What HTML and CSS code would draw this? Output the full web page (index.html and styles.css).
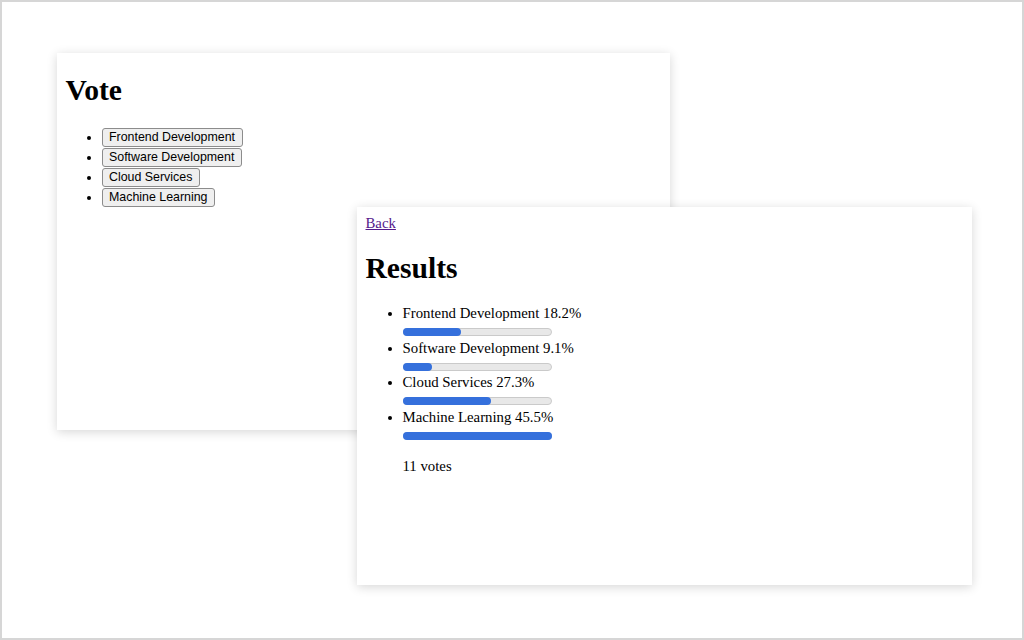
FILE: index.html
```html
<!DOCTYPE html>
<html lang="en">
<head>
    <meta charset="UTF-8">
    <meta name="viewport" content="width=device-width, initial-scale=1.0">
    <title>Poll</title>
    <link rel="stylesheet" href="styles.css">
</head>
<body>
    <div class="screen">

        <div class="window vote-window">
            <h1>Vote</h1>
            <ul class="options">
                <li><button>Frontend Development</button></li>
                <li><button>Software Development</button></li>
                <li><button>Cloud Services</button></li>
                <li><button>Machine Learning</button></li>
            </ul>
        </div>

        <div class="window results-window">
            <a href="#" class="back">Back</a>
            <h1>Results</h1>
            <ul class="results">
                <li>
                    <span class="label">Frontend Development 18.2%</span>
                    <span class="bar"><span class="fill" style="width: 40%"></span></span>
                </li>
                <li>
                    <span class="label">Software Development 9.1%</span>
                    <span class="bar"><span class="fill" style="width: 20%"></span></span>
                </li>
                <li>
                    <span class="label">Cloud Services 27.3%</span>
                    <span class="bar"><span class="fill" style="width: 60%"></span></span>
                </li>
                <li>
                    <span class="label">Machine Learning 45.5%</span>
                    <span class="bar"><span class="fill" style="width: 100%"></span></span>
                </li>
            </ul>
            <p class="total">11 votes</p>
        </div>

    </div>
</body>
</html>
```

FILE: styles.css
```css
body {
    margin: 0;
    background-color: #ffffff;
}
.screen {
    position: relative;
    width: 1024px;
    height: 640px;
    box-sizing: border-box;
    border: 2px solid #d6d6d6;
    background-color: #ffffff;
    overflow: hidden;
}
.window {
    position: absolute;
    box-sizing: border-box;
    background-color: #ffffff;
    box-shadow: 0 2px 10px rgba(0, 0, 0, 0.16);
    padding: 7.5px 8.5px;
    font-family: "Liberation Serif", "Times New Roman", serif;
    font-size: 14.8px;
    line-height: 17px;
    color: #000;
}
.vote-window {
    left: 55px;
    top: 51px;
    width: 613px;
    height: 377px;
}
.results-window {
    left: 355px;
    top: 205px;
    width: 615px;
    height: 378px;
}
h1 {
    font-size: 29.6px;
    line-height: 34px;
    font-weight: bold;
    margin: 19.8px 0;
}
.vote-window h1 {
    margin-top: 12.5px;
}
ul {
    margin: 14.8px 0;
    padding-left: 37px;
}
.options {
    padding-left: 36px;
}
.options li {
    line-height: 20px;
    height: 20px;
}
.options button {
    vertical-align: top;
    height: 19px;
    box-sizing: border-box;
    margin: 1px 0 0;
    padding: 0 6.5px;
    font-family: "Liberation Sans", Arial, sans-serif;
    font-size: 12.4px;
    color: #000;
    background-color: #efefef;
    border: 1px solid #8c8c8c;
    border-radius: 3px;
}
.back {
    color: #551a8b;
    text-decoration: underline;
}
.results li {
    height: 34.6px;
}
.label {
    display: block;
}
.bar {
    display: block;
    position: relative;
    width: 149px;
    height: 8px;
    margin-top: 6px;
    box-sizing: border-box;
    background-color: #e8e8e8;
    border: 1px solid #cacaca;
    border-radius: 4px;
}
.fill {
    position: absolute;
    left: -1px;
    top: -1px;
    height: 8px;
    background-color: #3570dc;
    border-radius: 4px;
}
.fill[style="width: 100%"] {
    width: 149px !important;
}
.total {
    margin: 13.5px 0;
    padding-left: 37px;
}
```
